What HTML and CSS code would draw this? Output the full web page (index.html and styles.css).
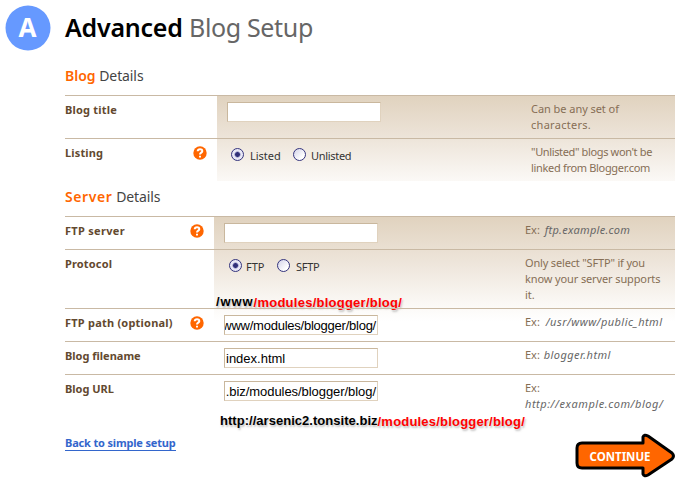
FILE: index.html
```html
<!DOCTYPE html>
<html lang="en">
<head>
<meta charset="utf-8">
<title>Advanced Blog Setup</title>
<link rel="stylesheet" href="styles.css">
</head>
<body>
<header class="masthead">
  <svg class="badge" viewBox="0 0 46 46"><circle cx="23" cy="23" r="22.5" fill="#6699ff"/><text x="22.5" y="32" text-anchor="middle" class="badge-letter">A</text></svg>
  <h1><span class="strong">Advanced</span> <span class="rest">Blog Setup</span></h1>
</header>
<main>
  <h2 class="h-blog"><span class="accent">Blog</span> <span class="plain">Details</span></h2>
  <section class="table blog">
    <div class="row">
      <div class="label"><span class="l-title">Blog title</span></div>
      <div class="value"><input class="field" type="text"></div>
      <div class="hint"><span class="n1">Can be any set of</span><br><span class="n2">characters.</span></div>
    </div>
    <div class="row">
      <div class="label"><span class="l-listing">Listing</span><svg class="help" viewBox="0 0 14 14"><circle cx="7" cy="7" r="6.7"/><path d="M4.7 5.2C4.8 2.4 9.4 2.5 9.3 5.1 9.2 6.7 7 6.5 7 8.5M7 9.8V11.6"/></svg></div>
      <div class="value radios">
        <i class="radio on"></i><span class="r-listed">Listed</span><i class="radio"></i><span class="r-unlisted">Unlisted</span>
      </div>
      <div class="hint"><span class="n3">"Unlisted" blogs won't be</span><br><span class="n4">linked from Blogger.com</span></div>
    </div>
  </section>
  <h2 class="h-server"><span class="accent">Server</span> <span class="plain">Details</span></h2>
  <section class="table server">
    <div class="row">
      <div class="label"><span class="l-server">FTP server</span><svg class="help" viewBox="0 0 14 14"><circle cx="7" cy="7" r="6.7"/><path d="M4.7 5.2C4.8 2.4 9.4 2.5 9.3 5.1 9.2 6.7 7 6.5 7 8.5M7 9.8V11.6"/></svg></div>
      <div class="value"><input class="field" type="text"></div>
      <div class="hint">Ex: <em class="e1">ftp.example.com</em></div>
    </div>
    <div class="row">
      <div class="label"><span class="l-protocol">Protocol</span></div>
      <div class="value radios">
        <i class="radio on"></i><span class="r-ftp">FTP</span><i class="radio"></i><span class="r-sftp">SFTP</span>
      </div>
      <div class="hint"><span class="n5">Only select "SFTP" if you</span><br><span class="n6">know your server supports</span><br>it.</div>
      <div class="note note-path"><span class="np1">/www</span><span class="red np2">/modules/blogger/blog/</span></div>
    </div>
    <div class="row">
      <div class="label"><span class="l-path">FTP path (optional)</span><svg class="help" viewBox="0 0 14 14"><circle cx="7" cy="7" r="6.7"/><path d="M4.7 5.2C4.8 2.4 9.4 2.5 9.3 5.1 9.2 6.7 7 6.5 7 8.5M7 9.8V11.6"/></svg></div>
      <div class="value"><div class="field filled tail"><span class="t-path">www/modules/blogger/blog/</span></div></div>
      <div class="hint">Ex: <em class="e2">/usr/www/public_html</em></div>
    </div>
    <div class="row">
      <div class="label"><span class="l-file">Blog filename</span></div>
      <div class="value"><div class="field filled"><span>index.html</span></div></div>
      <div class="hint">Ex: <em class="e3">blogger.html</em></div>
    </div>
    <div class="row">
      <div class="label"><span class="l-url">Blog URL</span></div>
      <div class="value"><div class="field filled tail"><span>.biz/modules/blogger/blog/</span></div></div>
      <div class="hint">Ex:<br><em class="e4">http://example.com/blog/</em></div>
      <div class="note note-url"><span class="nu1">http://arsenic2.tonsite.biz</span><span class="red nu2">/modules/blogger/blog/</span></div>
    </div>
  </section>
  <footer>
    <a class="back" href="#">Back to simple setup</a>
    <svg class="continue" viewBox="0 0 102 46"><path d="M7 10H68V4Q69 1 73 3L97 20Q100 23 97 26L73 42Q69 44 68 41V35H7Q2 35 2 30V15Q2 10 7 10Z"/><text x="14.5" y="27.5" textLength="61" lengthAdjust="spacingAndGlyphs">CONTINUE</text></svg>
  </footer>
</main>
</body>
</html>
```
FILE: styles.css
```css
* { box-sizing: border-box; }
body { margin: 0; background: #fff; color: #333; font: 11px/16px "Noto Sans", sans-serif; overflow: hidden; }
.masthead { display: flex; height: 64px; padding: 4.5px 0 0 4.5px; }
.badge { width: 46px; height: 46px; }
.badge-letter { font: bold 26px "Noto Sans", sans-serif; fill: #fff; }
h1 { margin: 4.5px 0 0 14.5px; font: 400 25px/36px "Noto Sans", sans-serif; white-space: nowrap; }
h1 .strong { color: #000; font-weight: 600; letter-spacing: -.25px; }
h1 .rest { color: #666; letter-spacing: -.35px; }
main { width: 610px; margin-left: 65px; }
h2 { margin: 0; font: 400 14px/20px "Noto Sans", sans-serif; white-space: nowrap; }
.h-blog { height: 31px; padding-top: 2px; }
.h-server { height: 35px; padding-top: 6px; }
.h-server .accent { letter-spacing: .6px; }
.accent { color: #f60; font-weight: 600; }
.plain { color: #444; letter-spacing: -.1px; }
.table { display: flex; flex-direction: column; background-repeat: no-repeat; }
.blog { background-image: linear-gradient(#e0d2be, #ede4d9 50%, #fbf9f6); background-size: 458px 86px; background-position: 152px 0; }
.server { background-image: linear-gradient(#e0d2be, #ede4d9 42%, #fbf9f6 84%, #fff); background-size: 461px 106px; background-position: 149px 0; }
.row { display: grid; position: relative; border-top: 1px solid #c9b9a4; }
.blog .row { grid-template-columns: 152px 314px 144px; height: 43px; }
.server .row { grid-template-columns: 149px 311px 150px; height: 33px; }
.server .row:nth-child(2) { height: 59px; }
.server .row:nth-child(5) { height: 47px; }
.label { display: flex; justify-content: space-between; padding: 6px 10px 0 0; color: #63492f; font-weight: 700; white-space: nowrap; }
.l-title { letter-spacing: .2px; }
.l-listing, .l-protocol { letter-spacing: .15px; }
.l-server { letter-spacing: .3px; }
.l-path { letter-spacing: .22px; }
.help { width: 14px; height: 14px; margin-top: 1px; }
.help circle { fill: #f60; }
.help path { fill: none; stroke: #fff; stroke-width: 2; }
.value { padding: 6px 0 0 10px; }
.field { display: block; width: 154px; height: 20px; margin: 0; padding: 0 1px; border: 1px solid; border-color: #c9b79d #e0d2be #e0d2be #c9b79d; background: #fff; border-radius: 0; font: 13px/19px "Liberation Sans", sans-serif; outline: none; }
.filled { display: flex; overflow: hidden; color: #000; white-space: nowrap; }
.tail { justify-content: flex-end; letter-spacing: -.06px; }
.t-path { letter-spacing: -.24px; }
.radios { display: flex; align-items: flex-start; padding: 9px 0 0 14px; }
.server .radios { padding: 9px 0 0 15px; }
.radio { width: 13px; height: 13px; border: 1.5px solid #34347e; border-radius: 50%; background: linear-gradient(135deg, #d2d2e8, #fff 75%); }
.radio.on { background: radial-gradient(circle, #303078 0 2px, #8585bb 2.5px, #e8e8f6 3.5px); }
.radios span { white-space: nowrap; }
.r-listed { width: 43px; margin-left: 6px; }
.r-unlisted { margin-left: 5px; letter-spacing: -.3px; }
.r-ftp { width: 31px; margin-left: 4px; }
.r-sftp { margin-left: 6px; letter-spacing: -.3px; }
.hint { padding-top: 5px; color: #866e55; white-space: nowrap; }
.hint em { color: #666; }
.n1 { letter-spacing: -.05px; }
.n2 { letter-spacing: .28px; }
.n3 { letter-spacing: -.36px; }
.n4 { letter-spacing: -.32px; }
.n5 { letter-spacing: -.17px; }
.n6 { letter-spacing: -.12px; }
.e1 { margin-left: 2px; letter-spacing: .27px; }
.e2 { margin-left: 3px; letter-spacing: .45px; }
.e3 { margin-left: 1px; letter-spacing: .42px; }
.e4 { letter-spacing: .55px; }
.note { display: flex; position: absolute; color: #000; font: bold 13px/16px "Liberation Sans", sans-serif; white-space: nowrap; text-shadow: 1px 2px 2px #8888; }
.note-path { left: 151px; top: 44px; }
.np1 { letter-spacing: .9px; }
.np2 { letter-spacing: .25px; }
.note-url { left: 155px; top: 38px; }
.nu1 { letter-spacing: .03px; }
.nu2 { letter-spacing: .2px; }
.red { padding-top: 1px; color: #f00; }
footer { display: flex; justify-content: space-between; align-items: flex-start; height: 60px; }
.back { margin-top: 15px; border-bottom: 1px solid #36c; color: #36c; font-weight: 700; line-height: 14px; letter-spacing: -.17px; text-decoration: none; white-space: nowrap; }
.continue { width: 102px; height: 46px; margin: 12px -1.5px 0 0; }
.continue path { fill: #f60; stroke: #000; stroke-width: 3; stroke-linejoin: round; }
.continue text { fill: #fff; font: bold 13px "Noto Sans", sans-serif; }
```
